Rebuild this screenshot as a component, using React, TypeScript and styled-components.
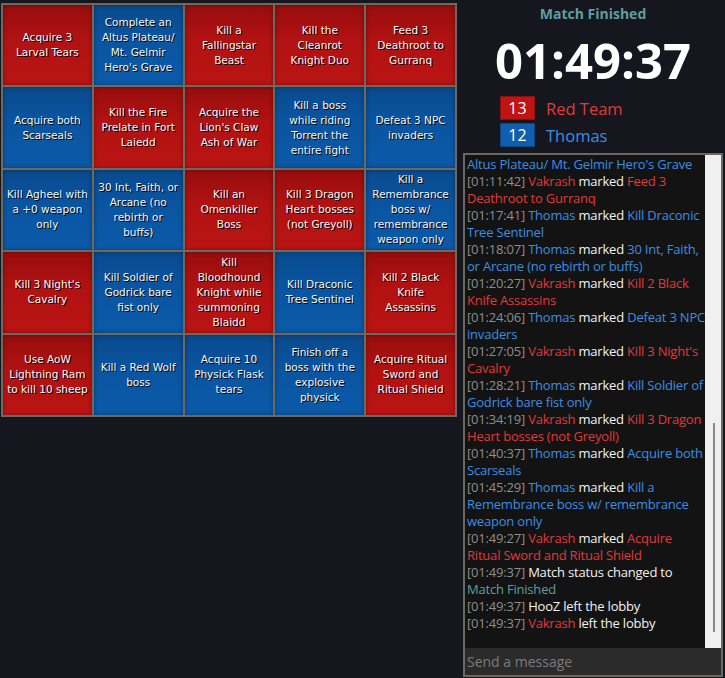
import React, { useLayoutEffect, useRef } from "react";
import styled, { createGlobalStyle } from "styled-components";

type Team = "red" | "blue";

const GlobalStyle = createGlobalStyle`
  html, body { margin: 0; padding: 0; background: #16161f; }
  body { font-family: "Open Sans", "Noto Sans", sans-serif; }
  * { box-sizing: border-box; }
`;

const Page = styled.div`
  display: flex;
  align-items: flex-start;
  width: 725px;
  height: 678px;
  padding: 3px 0 0 1px;
  overflow: hidden;
`;

const Board = styled.div`
  display: grid;
  grid-template-columns: repeat(5, 1fr);
  grid-template-rows: repeat(5, 1fr);
  gap: 2px;
  width: 456px;
  height: 414px;
  flex: none;
  border: 2px solid #6e695f;
  background: #6e695f;
`;

const Cell = styled.div<{ $team: Team }>`
  display: flex;
  align-items: center;
  justify-content: center;
  text-align: center;
  white-space: nowrap;
  font-family: "DejaVu Sans", Verdana, sans-serif;
  font-size: 10.5px;
  line-height: 15px;
  color: #f7f7f7;
  text-shadow: 1px 1px 0 #000;
  background: ${(p) =>
    p.$team === "red"
      ? "linear-gradient(to bottom, #980d0d 0%, #b21212 45%, #ba1414 100%)"
      : "linear-gradient(to bottom, #094a8d 0%, #0a55a2 45%, #0b5aa8 100%)"};
  box-shadow: inset 0 0 4px rgba(0, 0, 0, 0.35);
`;

const Side = styled.div`
  flex: 1;
  display: flex;
  flex-direction: column;
  padding: 0 3px 0 6px;
`;

const Status = styled.div`
  margin-top: 1px;
  text-align: center;
  font-weight: 700;
  font-size: 14px;
  line-height: 20px;
  color: #5f9ea0;
`;

const Timer = styled.div`
  margin-top: 12px;
  text-align: center;
  font-weight: 700;
  font-size: 49px;
  line-height: 49px;
  color: #ffffff;
`;

const Scores = styled.div`
  display: flex;
  flex-direction: column;
  gap: 3px;
  margin-top: 11px;
  padding-left: 37px;
`;

const ScoreRow = styled.div`
  display: flex;
  align-items: center;
  gap: 11px;
  height: 24px;
`;

const ScoreBox = styled.div<{ $team: Team }>`
  width: 35px;
  height: 24px;
  display: flex;
  align-items: center;
  justify-content: center;
  font-size: 16px;
  color: #ffffff;
  background: ${(p) => (p.$team === "red" ? "#c01414" : "#0f5fae")};
  border: 1px solid ${(p) => (p.$team === "red" ? "#8c0f0f" : "#0a447f")};
`;

const ScoreName = styled.div<{ $team: Team }>`
  font-size: 16.5px;
  color: ${(p) => (p.$team === "red" ? "#e03a3a" : "#3a8ee4")};
`;

const ChatBox = styled.div`
  margin-top: 6px;
  height: 524px;
  display: flex;
  flex-direction: column;
  border: 2px solid #6c675f;
  background: #131313;
`;

const LogArea = styled.div`
  flex: 1;
  min-height: 0;
  display: flex;
`;

const Log = styled.div`
  flex: 1;
  min-width: 0;
  overflow: hidden;
  padding: 0 0 16px 2px;
  font-size: 13px;
  line-height: 17px;
  letter-spacing: -0.2px;
`;

const ScrollTrack = styled.div`
  width: 16px;
  flex: none;
  display: flex;
  flex-direction: column;
  justify-content: flex-end;
  padding: 16px 6px 16px 8px;
  background: #f0f0f0;
`;

const ScrollThumb = styled.div`
  height: 209px;
  background: #8a8a8a;
`;

const Line = styled.div`
  white-space: nowrap;
`;

const Seg = styled.span<{ $c: Tone }>`
  color: ${(p) => toneColor[p.$c]};
`;

const Input = styled.input`
  height: 27px;
  flex: none;
  border: none;
  outline: none;
  padding: 0 2px;
  background: #2b2b2b;
  color: #e0e0e0;
  font-family: "Open Sans", "Noto Sans", sans-serif;
  font-size: 14px;
  &::placeholder {
    color: #7b7b7b;
  }
`;

type Tone = "ts" | "w" | "r" | "b" | "t";
const toneColor: Record<Tone, string> = {
  ts: "#8e8e8e",
  w: "#f2f2f2",
  r: "#e0393b",
  b: "#3a8ee4",
  t: "#5f9ea0",
};

const cells: { team: Team; lines: string[] }[] = [
  { team: "red", lines: ["Acquire 3", "Larval Tears"] },
  { team: "blue", lines: ["Complete an", "Altus Plateau/", "Mt. Gelmir", "Hero's Grave"] },
  { team: "red", lines: ["Kill a", "Fallingstar", "Beast"] },
  { team: "red", lines: ["Kill the", "Cleanrot", "Knight Duo"] },
  { team: "red", lines: ["Feed 3", "Deathroot to", "Gurranq"] },
  { team: "blue", lines: ["Acquire both", "Scarseals"] },
  { team: "red", lines: ["Kill the Fire", "Prelate in Fort", "Laiedd"] },
  { team: "red", lines: ["Acquire the", "Lion's Claw", "Ash of War"] },
  { team: "blue", lines: ["Kill a boss", "while riding", "Torrent the", "entire fight"] },
  { team: "blue", lines: ["Defeat 3 NPC", "invaders"] },
  { team: "blue", lines: ["Kill Agheel with", "a +0 weapon", "only"] },
  { team: "blue", lines: ["30 Int, Faith, or", "Arcane (no", "rebirth or", "buffs)"] },
  { team: "red", lines: ["Kill an", "Omenkiller", "Boss"] },
  { team: "red", lines: ["Kill 3 Dragon", "Heart bosses", "(not Greyoll)"] },
  { team: "blue", lines: ["Kill a", "Remembrance", "boss w/", "remembrance", "weapon only"] },
  { team: "red", lines: ["Kill 3 Night's", "Cavalry"] },
  { team: "blue", lines: ["Kill Soldier of", "Godrick bare", "fist only"] },
  { team: "red", lines: ["Kill", "Bloodhound", "Knight while", "summoning", "Blaidd"] },
  { team: "blue", lines: ["Kill Draconic", "Tree Sentinel"] },
  { team: "red", lines: ["Kill 2 Black", "Knife", "Assassins"] },
  { team: "red", lines: ["Use AoW", "Lightning Ram", "to kill 10 sheep"] },
  { team: "blue", lines: ["Kill a Red Wolf", "boss"] },
  { team: "blue", lines: ["Acquire 10", "Physick Flask", "tears"] },
  { team: "blue", lines: ["Finish off a", "boss with the", "explosive", "physick"] },
  { team: "red", lines: ["Acquire Ritual", "Sword and", "Ritual Shield"] },
];

type Segment = [Tone, string];
type Message = Segment[][];

const mark = (time: string, team: Team, goal: string[]): Message => {
  const who = team === "red" ? "Vakrash" : "Thomas";
  const c: Tone = team === "red" ? "r" : "b";
  return goal.map((g, i) =>
    i === 0
      ? ([["ts", `[${time}] `], [c, who], ["w", " marked "], [c, g]] as Segment[])
      : ([[c, g]] as Segment[])
  );
};

const info = (time: string, parts: Segment[][]): Message =>
  parts.map((p, i) => (i === 0 ? ([["ts", `[${time}] `], ...p] as Segment[]) : p));

const messages: Message[] = [
  info("00:00:00", [[["w", "HooZ joined the lobby"]]]),
  info("00:00:00", [[["r", "Vakrash"], ["w", " joined the lobby"]]]),
  info("00:00:00", [[["b", "Thomas"], ["w", " joined the lobby"]]]),
  info("00:00:00", [[["w", "Match status changed to"]], [["t", "Starting"]]]),
  info("00:00:00", [[["w", "Match status changed to"]], [["t", "Running"]]]),
  mark("00:09:14", "red", ["Acquire 3", "Larval Tears"]),
  mark("00:14:52", "blue", ["Kill a Red", "Wolf boss"]),
  mark("00:21:33", "red", ["Kill the Fire", "Prelate in Fort Laiedd"]),
  mark("00:26:48", "blue", ["Acquire 10", "Physick Flask tears"]),
  mark("00:31:05", "red", ["Acquire the", "Lion's Claw Ash of War"]),
  mark("00:38:21", "blue", ["Kill Agheel", "with a +0 weapon only"]),
  mark("00:42:10", "red", ["Kill the", "Cleanrot Knight Duo"]),
  mark("00:47:56", "red", ["Kill a", "Fallingstar Beast"]),
  mark("00:52:34", "blue", ["Kill a boss", "while riding Torrent the entire fight"]),
  mark("00:55:40", "red", ["Kill an", "Omenkiller Boss"]),
  mark("00:58:02", "blue", ["Finish off a", "boss with the explosive physick"]),
  mark("01:01:19", "red", ["Use AoW", "Lightning Ram to kill 10 sheep"]),
  mark("01:03:45", "red", ["Kill", "Bloodhound Knight while summoning", "Blaidd"]),
  mark("01:06:12", "blue", ["Complete an", "Altus Plateau/ Mt. Gelmir Hero's Grave"]),
  mark("01:11:42", "red", ["Feed 3", "Deathroot to Gurranq"]),
  mark("01:17:41", "blue", ["Kill Draconic", "Tree Sentinel"]),
  mark("01:18:07", "blue", ["30 Int, Faith,", "or Arcane (no rebirth or buffs)"]),
  mark("01:20:27", "red", ["Kill 2 Black", "Knife Assassins"]),
  mark("01:24:06", "blue", ["Defeat 3 NPC", "invaders"]),
  mark("01:27:05", "red", ["Kill 3 Night's", "Cavalry"]),
  mark("01:28:21", "blue", ["Kill Soldier of", "Godrick bare fist only"]),
  mark("01:34:19", "red", ["Kill 3 Dragon", "Heart bosses (not Greyoll)"]),
  mark("01:40:37", "blue", ["Acquire both", "Scarseals"]),
  mark("01:45:29", "blue", ["Kill a", "Remembrance boss w/ remembrance", "weapon only"]),
  mark("01:49:27", "red", ["Acquire", "Ritual Sword and Ritual Shield"]),
  info("01:49:37", [[["w", "Match status changed to"]], [["t", "Match Finished"]]]),
  info("01:49:37", [[["w", "HooZ left the lobby"]]]),
  info("01:49:37", [[["r", "Vakrash"], ["w", " left the lobby"]]]),
];

export default function App() {
  const logRef = useRef<HTMLDivElement>(null);
  useLayoutEffect(() => {
    const el = logRef.current;
    if (el) el.scrollTop = el.scrollHeight;
  }, []);

  return (
    <>
      <GlobalStyle />
      <Page>
        <Board>
          {cells.map((c, i) => (
            <Cell key={i} $team={c.team}>
              <div>
                {c.lines.map((l, j) => (
                  <div key={j}>{l}</div>
                ))}
              </div>
            </Cell>
          ))}
        </Board>
        <Side>
          <Status>Match Finished</Status>
          <Timer>01:49:37</Timer>
          <Scores>
            <ScoreRow>
              <ScoreBox $team="red">13</ScoreBox>
              <ScoreName $team="red">Red Team</ScoreName>
            </ScoreRow>
            <ScoreRow>
              <ScoreBox $team="blue">12</ScoreBox>
              <ScoreName $team="blue">Thomas</ScoreName>
            </ScoreRow>
          </Scores>
          <ChatBox>
            <LogArea>
              <Log ref={logRef}>
                {messages.map((m, i) => (
                  <div key={i}>
                    {m.map((line, j) => (
                      <Line key={j}>
                        {line.map(([tone, text], k) => (
                          <Seg key={k} $c={tone}>
                            {text}
                          </Seg>
                        ))}
                      </Line>
                    ))}
                  </div>
                ))}
              </Log>
              <ScrollTrack>
                <ScrollThumb />
              </ScrollTrack>
            </LogArea>
            <Input placeholder="Send a message" />
          </ChatBox>
        </Side>
      </Page>
    </>
  );
}
